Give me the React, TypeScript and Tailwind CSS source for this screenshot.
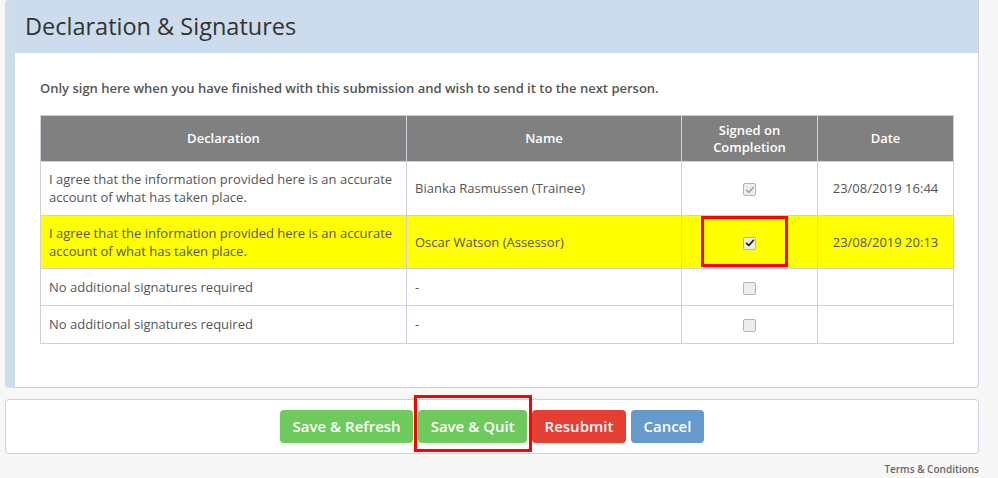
import React from 'react';

type Row = {
  declaration: string;
  name: string;
  signed: boolean;
  disabled?: boolean;
  date: string;
  highlight?: boolean;
};

const ROWS: Row[] = [
  {
    declaration: 'I agree that the information provided here is an accurate account of what has taken place.',
    name: 'Bianka Rasmussen (Trainee)',
    signed: true,
    disabled: true,
    date: '23/08/2019 16:44',
  },
  {
    declaration: 'I agree that the information provided here is an accurate account of what has taken place.',
    name: 'Oscar Watson (Assessor)',
    signed: true,
    date: '23/08/2019 20:13',
    highlight: true,
  },
  { declaration: 'No additional signatures required', name: '-', signed: false, date: '' },
  { declaration: 'No additional signatures required', name: '-', signed: false, date: '' },
];

const Check: React.FC<{ checked: boolean; disabled?: boolean }> = ({ checked, disabled }) => (
  <span className="inline-flex h-[13px] w-[13px] items-center justify-center rounded-[2px] border border-[#b5b5b5] bg-[#ededed] align-middle">
    {checked && (
      <svg viewBox="0 0 12 12" className="h-[10px] w-[10px]">
        <path
          d="M2 6.5 L4.6 9 L10 2.8"
          fill="none"
          stroke={disabled ? '#a9a9a9' : '#222'}
          strokeWidth="2"
          strokeLinecap="round"
          strokeLinejoin="round"
        />
      </svg>
    )}
  </span>
);

const App: React.FC = () => {
  const cell = 'h-[37.25px] border border-[#cfcfe0] px-[8px] py-[8.25px] leading-[18px] align-middle';
  const btn = 'h-[33px] rounded-[4px] px-[12.5px] text-[15px] font-semibold text-white';

  return (
    <div className="min-h-screen bg-[#f7f7f7] pl-[5px] pr-[19px] font-['Open_Sans',sans-serif] text-[#555]">
      <section className="overflow-hidden rounded-b-[4px] rounded-tl-[4px] border-b border-r border-[#cfcfe0] border-l-[10px] border-l-[#cddded] bg-white">
        <div className="-ml-[10px] flex h-[53px] items-center border-l-[10px] border-l-[#6699cc] bg-[#ccdcec] pl-[10px]">
          <h2 className="text-[23.5px] leading-none text-[#333]">Declaration &amp; Signatures</h2>
        </div>

        <div className="pb-[43px] pl-[25px] pr-[25px] pt-[26px]">
          <p className="mb-[18px] text-[13px] font-semibold leading-[18px]">
            Only sign here when you have finished with this submission and wish to send it to the next person.
          </p>

          <table className="w-[913px] table-fixed border-collapse text-[13px]">
            <colgroup>
              <col className="w-[366px]" />
              <col className="w-[275px]" />
              <col className="w-[136px]" />
              <col className="w-[136px]" />
            </colgroup>
            <thead>
              <tr className="bg-[#808080] text-white">
                <th className="h-[46px] border border-[#cfcfe0] px-2 font-semibold leading-[17px]">Declaration</th>
                <th className="border border-[#cfcfe0] px-2 font-semibold leading-[17px]">Name</th>
                <th className="border border-[#cfcfe0] px-2 font-semibold leading-[17px]">
                  Signed on
                  <br />
                  Completion
                </th>
                <th className="border border-[#cfcfe0] px-2 font-semibold leading-[17px]">Date</th>
              </tr>
            </thead>
            <tbody>
              {ROWS.map((row, i) => (
                <tr key={i} className={row.highlight ? 'bg-[#ffff00]' : 'bg-white'}>
                  <td className={cell}>{row.declaration}</td>
                  <td className={cell}>{row.name}</td>
                  <td className={`${cell} text-center`}>
                    <span className="relative inline-block">
                      <Check checked={row.signed} disabled={row.disabled} />
                      {row.highlight && (
                        <span className="pointer-events-none absolute -left-[42px] -right-[32px] -top-[17px] -bottom-[16px] border-[3px] border-[#ff0000]" />
                      )}
                    </span>
                  </td>
                  <td className={`${cell} text-center`}>{row.date}</td>
                </tr>
              ))}
            </tbody>
          </table>
        </div>
      </section>

      <div className="mt-[11px] flex h-[55px] items-center justify-center gap-[5px] rounded-[4px] border border-[#cfcfe0] bg-white">
        <button className={`${btn} bg-[#6fca5e]`}>Save &amp; Refresh</button>
        <span className="relative inline-block">
          <button className={`${btn} bg-[#6fca5e]`}>Save &amp; Quit</button>
          <span className="pointer-events-none absolute -left-[4px] -right-[5px] -top-[15px] -bottom-[9px] border-[3px] border-[#ff0000]" />
        </span>
        <button className={`${btn} bg-[#e53e33]`}>Resubmit</button>
        <button className={`${btn} bg-[#6699cc]`}>Cancel</button>
      </div>

      <div className="mt-[8px] text-right text-[10px] font-semibold text-[#666]">Terms &amp; Conditions</div>
    </div>
  );
};

export default App;
